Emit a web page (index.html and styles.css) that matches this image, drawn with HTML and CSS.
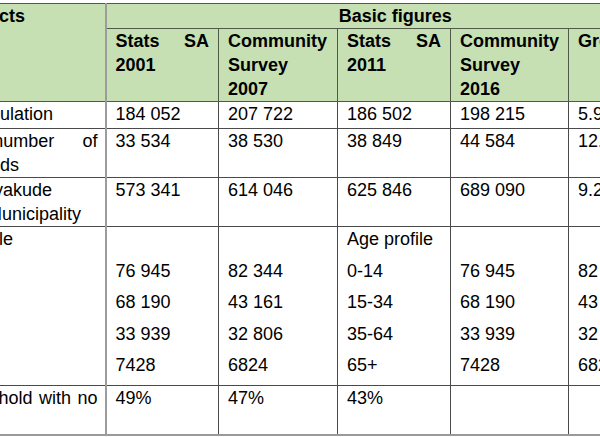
FILE: index.html
```html
<!DOCTYPE html>
<html>
<head>
<meta charset="utf-8">
<link rel="stylesheet" href="styles.css">
</head>
<body>
<table class="facts">
  <colgroup>
    <col class="c0"><col class="c1"><col class="c2"><col class="c3"><col class="c4"><col class="c5">
  </colgroup>
  <thead>
    <tr class="h1">
      <th class="lead" rowspan="2">Jozini facts</th>
      <th class="group" colspan="5">Basic figures</th>
    </tr>
    <tr class="h2">
      <th>Stats SA 2001</th>
      <th>Community Survey 2007</th>
      <th>Stats SA 2011</th>
      <th>Community Survey 2016</th>
      <th>Growth</th>
    </tr>
  </thead>
  <tbody>
    <tr class="r1">
      <td class="lead">Total population</td>
      <td>184 052</td><td>207 722</td><td>186 502</td><td>198 215</td><td>5.9%</td>
    </tr>
    <tr class="r2">
      <td class="lead">Total number of households</td>
      <td>33 534</td><td>38 530</td><td>38 849</td><td>44 584</td><td>12.9%</td>
    </tr>
    <tr class="r3">
      <td class="lead">Umkhanyakude District Municipality</td>
      <td>573 341</td><td>614 046</td><td>625 846</td><td>689 090</td><td>9.2%</td>
    </tr>
    <tr class="r4">
      <td class="lead"><p>Age profile</p></td>
      <td><p>&nbsp;</p><p>76 945</p><p>68 190</p><p>33 939</p><p>7428</p></td>
      <td><p>&nbsp;</p><p>82 344</p><p>43 161</p><p>32 806</p><p>6824</p></td>
      <td><p>Age profile</p><p>0-14</p><p>15-34</p><p>35-64</p><p>65+</p></td>
      <td><p>&nbsp;</p><p>76 945</p><p>68 190</p><p>33 939</p><p>7428</p></td>
      <td><p>&nbsp;</p><p>82 344</p><p>43 161</p><p>32 806</p><p>6824</p></td>
    </tr>
    <tr class="r5">
      <td class="lead">% household with no income</td>
      <td>49%</td><td>47%</td><td>43%</td><td></td><td></td>
    </tr>
  </tbody>
</table>
</body>
</html>
```
FILE: styles.css
```css
html, body {
  margin: 0;
  padding: 0;
  overflow: hidden;
  background: #ffffff;
}

body {
  padding-top: 3px;
  width: 600px;
  height: 437px;
}

.facts {
  border-collapse: collapse;
  table-layout: fixed;
  width: 766px;
  margin-left: -82px;
  font-family: "Liberation Sans", Arial, sans-serif;
  font-size: 18px;
  line-height: 24px;
  color: #000;
  border-top: 1px solid #3d3d3d;
  border-bottom: 2px solid #9a9a9a;
}

.c0 { width: 187px; }
.c1 { width: 113px; }
.c2 { width: 119px; }
.c3 { width: 113px; }
.c4 { width: 118px; }
.c5 { width: 116px; }

.facts th,
.facts td {
  border: 1px solid #4a4a4a;
  padding: 0 9px 0 9px;
  vertical-align: top;
  text-align: justify;
}

.facts thead th {
  background: #c6e0b4;
  font-weight: bold;
  border-color: #4f5a48;
}

.facts th.group {
  text-align: center;
}

.facts .lead {
  border-right: 2px solid #9c9c9c;
  padding-left: 8px;
  padding-right: 7px;
}

.facts p {
  margin: 0 0 7.5px 0;
}

.facts .r4 td {
  padding-top: 0;
}

.h1 { height: 25px; }
.h2 { height: 71px; }
.r1 { height: 27px; }
.r2 { height: 49px; }
.r3 { height: 49px; }
.r4 { height: 157px; }
.r5 { height: 48px; }
```
